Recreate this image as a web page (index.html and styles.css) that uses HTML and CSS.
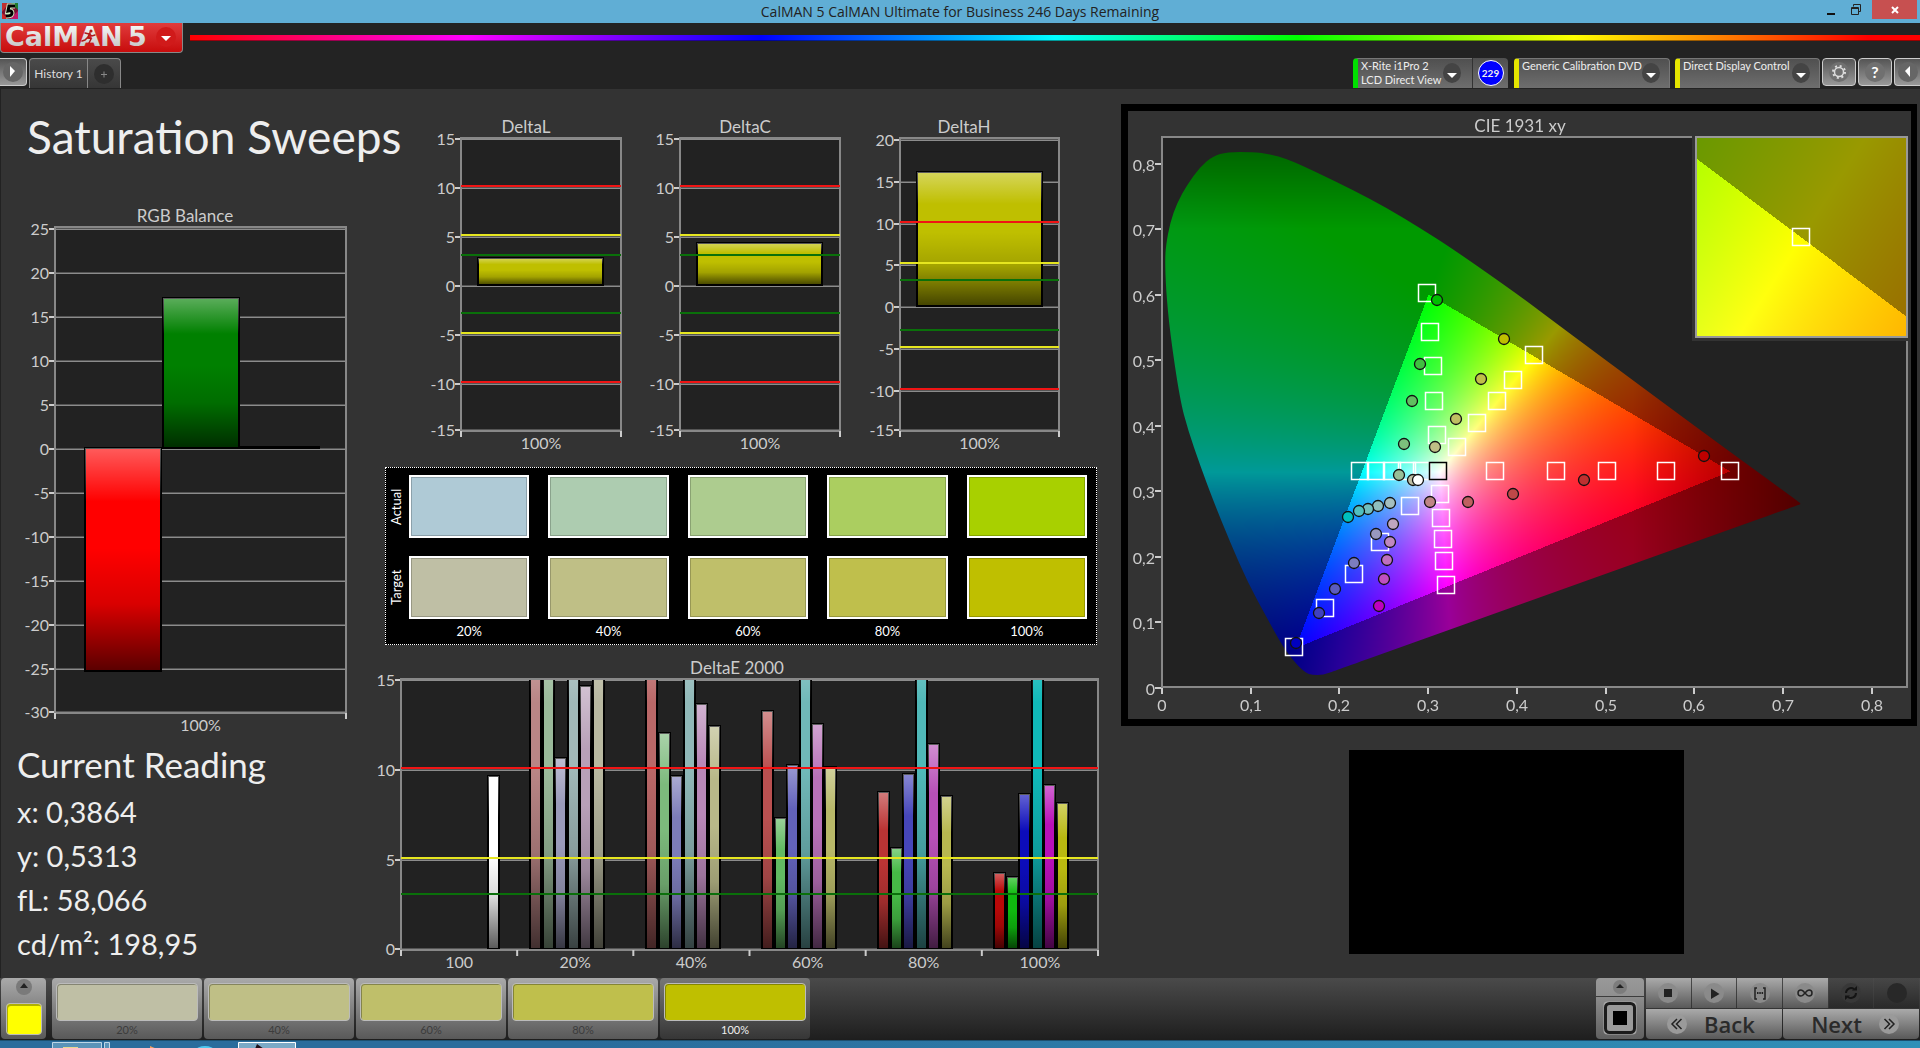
FILE: index.html
```html
<!DOCTYPE html>
<html lang="en">
<head>
<meta charset="utf-8">
<title>CalMAN 5</title>
<link rel="stylesheet" href="styles.css">
</head>
<body>
<svg class="defs" width="0" height="0" aria-hidden="true">
  <defs>
    <linearGradient id="shade" x1="0" y1="0" x2="0" y2="1">
      <stop offset="0" stop-color="#fff" stop-opacity=".36"/>
      <stop offset=".24" stop-color="#fff" stop-opacity="0"/>
      <stop offset=".24" stop-color="#000" stop-opacity="0"/>
      <stop offset=".45" stop-color="#000" stop-opacity="0"/>
      <stop offset=".7" stop-color="#000" stop-opacity=".15"/>
      <stop offset="1" stop-color="#000" stop-opacity=".65"/>
    </linearGradient>
    <linearGradient id="silver" x1="0" y1="0" x2="0" y2="1">
      <stop offset="0" stop-color="#fff"/>
      <stop offset="1" stop-color="#bdbdbd"/>
    </linearGradient>
  </defs>
</svg>

<header class="titlebar">
  <svg class="app-icon" width="16" height="16" viewBox="0 0 16 16" aria-hidden="true">
    <rect width="16" height="16" fill="#7a1030"/>
    <path d="M0 0h7L0 9z" fill="#c03030"/><path d="M9 0h7v7z" fill="#207a30"/><path d="M16 8v8H8z" fill="#c01868"/><path d="M0 10v6h6z" fill="#d02828"/>
    <path d="M13 3H7L6 8Q10 7 10 10T4 13" fill="none" stroke="#cfe8c0" stroke-width="5"/>
    <path d="M13 3H7L6 8Q10 7 10 10T4 13" fill="none" stroke="#000" stroke-width="3"/>
  </svg>
  <p class="window-title">CalMAN 5 CalMAN Ultimate for Business 246 Days Remaining</p>
  <div class="window-buttons">
    <button aria-label="Minimize"><svg width="12" height="14" viewBox="0 0 12 14"><path d="M1 10h8v2H1z" fill="#111"/></svg></button>
    <button aria-label="Restore"><svg width="12" height="12" viewBox="0 0 12 12" fill="none" stroke="#222"><path d="M3.500 2.500v-2h7v7h-2"/><path d="M1.500 3.500h7v7h-7zM1.500 4.500h7"/></svg></button>
    <button class="close" aria-label="Close"><svg width="8" height="8" viewBox="0 0 8 8" stroke="#fff" stroke-width="2"><path d="M1 1l6 6M7 1L1 7"/></svg></button>
  </div>
</header>

<div class="brand-row">
  <button class="logo" aria-label="CalMAN menu">
    <svg width="181" height="30" viewBox="0 0 181 30">
      <g fill="url(#silver)" font-family="DejaVu Sans" font-weight="700" font-size="27">
        <text x="4" y="23">CalMAN</text><text x="127" y="23">5</text>
      </g>
      <g fill="none" stroke="#b01818" stroke-width="1.500" stroke-linecap="round">
        <circle cx="90" cy="8" r=".8"/><path d="M89 10l-2 4 3 2-2 4M87 14l-3 3-3 1M84 10l4 1 3 2 3-1"/>
      </g>
      <circle cx="165" cy="14" r="10" fill="#d01a1a"/>
      <path d="M160 13h10l-5 5z" fill="#fff"/>
    </svg>
  </button>
  <div class="rainbow"></div>
</div>

<div class="tab-row">
  <button class="round-btn edge-left" aria-label="Expand left panel"><svg width="20" height="20" viewBox="0 0 20 20"><circle cx="10" cy="10" r="10" fill="#666"/><path d="M7 4l5 5-5 6z" fill="#fff"/></svg></button>
  <nav class="tabs">
    <a href="#history">History 1</a>
    <button aria-label="Add tab"><svg width="20" height="20" viewBox="0 0 20 20"><circle cx="10" cy="10" r="10" fill="#2e2e2e"/><path d="M7 10.500h6M10 7.500v6" stroke="#888"/></svg></button>
  </nav>
  <div class="devices">
    <button class="device device-meter ready"><span>X-Rite i1Pro 2<br>LCD Direct View</span><svg width="18" height="20" viewBox="0 0 18 20"><ellipse cx="9" cy="10" rx="9" ry="10" fill="#444"/><path d="M4 10h10l-5 5z" fill="#fff"/></svg></button>
    <div class="count"><span>229</span></div>
    <button class="device device-source"><span>Generic Calibration DVD</span><svg width="18" height="20" viewBox="0 0 18 20"><ellipse cx="9" cy="10" rx="9" ry="10" fill="#444"/><path d="M4 10h10l-5 5z" fill="#fff"/></svg></button>
    <button class="device device-display"><span>Direct Display Control</span><svg width="18" height="20" viewBox="0 0 18 20"><ellipse cx="9" cy="10" rx="9" ry="10" fill="#444"/><path d="M4 10h10l-5 5z" fill="#fff"/></svg></button>
    <button class="round-btn" aria-label="Settings"><svg width="20" height="20" viewBox="0 0 20 20"><circle cx="10" cy="10" r="10" fill="#707070"/><circle cx="10" cy="10" r="4.500" fill="none" stroke="#ddd" stroke-width="1.500"/><circle cx="10" cy="10" r="6" fill="none" stroke="#ddd" stroke-width="2" stroke-dasharray="2 2.710"/></svg></button>
    <button class="round-btn help" aria-label="Help"><span>?</span></button>
    <button class="round-btn edge-right" aria-label="Collapse right panel"><svg width="20" height="20" viewBox="0 0 20 20"><circle cx="10" cy="10" r="10" fill="#666"/><path d="M12 4l-5 5 5 6z" fill="#fff"/></svg></button>
  </div>
</div>

<main class="workspace">
  <section class="col-left">
    <h1>Saturation Sweeps</h1>
    <svg id="rgb-balance" class="chart" viewBox="0 0 385 530" role="img" aria-label="RGB Balance"></svg>
    <div class="reading">
      <h2>Current Reading</h2>
      <p>x: 0,3864</p>
      <p>y: 0,5313</p>
      <p>fL: 58,066</p>
      <p>cd/m²: 198,95</p>
    </div>
  </section>

  <section class="col-mid">
    <div class="deltas">
      <svg id="delta-l" class="chart" viewBox="0 0 219 350" role="img" aria-label="DeltaL"></svg>
      <svg id="delta-c" class="chart" viewBox="0 0 219 350" role="img" aria-label="DeltaC"></svg>
      <svg id="delta-h" class="chart" viewBox="0 0 219 350" role="img" aria-label="DeltaH"></svg>
    </div>
    <div class="swatches">
      <div class="swatch-row"><span class="side">Actual</span><i class="a20"></i><i class="a40"></i><i class="a60"></i><i class="a80"></i><i class="a100"></i></div>
      <div class="swatch-row"><span class="side">Target</span><i class="t20"></i><i class="t40"></i><i class="t60"></i><i class="t80"></i><i class="t100"></i></div>
      <div class="swatch-row captions"><span></span><b>20%</b><b>40%</b><b>60%</b><b>80%</b><b>100%</b></div>
    </div>
    <svg id="delta-e" class="chart" viewBox="0 0 736 320" role="img" aria-label="DeltaE 2000"></svg>
  </section>

  <section class="col-right">
    <div class="cie">
      <canvas id="cie-fill" width="783" height="608"></canvas>
      <svg id="cie-marks" viewBox="1128 111 783 608" role="img" aria-label="CIE 1931 xy"></svg>
    </div>
    <div class="preview"></div>
  </section>
</main>

<footer class="bottom-bar">
  <button class="current-color" aria-label="Current color"><svg width="16" height="16" viewBox="0 0 16 16"><circle cx="8" cy="8" r="8" fill="#7a7a7a"/><path d="M4 9h8L8 4z" fill="#222"/></svg><i></i></button>
  <nav class="levels">
    <button><i class="t20"></i>20%</button>
    <button><i class="t40"></i>40%</button>
    <button><i class="t60"></i>60%</button>
    <button><i class="t80"></i>80%</button>
    <button class="active"><i class="t100"></i>100%</button>
  </nav>
  <div class="pattern">
    <button aria-label="Pattern list"><svg width="16" height="14" viewBox="0 0 16 14"><circle cx="8" cy="7" r="7" fill="#7c7c7c"/><path d="M4 8h8L8 4z" fill="#222"/></svg></button>
    <button aria-label="Pattern window"><svg width="34" height="34" viewBox="0 0 34 34"><rect x=".5" y=".5" width="33" height="33" rx="4" fill="#a8a8a8"/><rect x="2.500" y="2.500" width="29" height="29" rx="4" fill="#9a9a9a" stroke="#1c1c1c" stroke-width="3"/><path d="M10 10h14v14H10z"/></svg></button>
  </div>
  <div class="transport">
    <div class="controls">
      <button aria-label="Stop"><svg width="20" height="20" viewBox="0 0 20 20"><circle cx="10" cy="10" r="10" fill="#8a8a8a"/><path d="M6 6h8v8H6z" fill="#222"/></svg></button>
      <button aria-label="Read"><svg width="20" height="20" viewBox="0 0 20 20"><circle cx="10" cy="10" r="10" fill="#8a8a8a"/><path d="M7 5.500l8.500 5.500L7 16z" fill="#222"/></svg></button>
      <button aria-label="Read series"><svg width="20" height="20" viewBox="0 0 20 20"><circle cx="10" cy="10" r="10" fill="#8a8a8a"/><path d="M7 5H5v11h2M13 5h2v11h-2" fill="none" stroke="#222" stroke-width="1.500"/><path d="M7 10h1.500M9.300 10h1.500M11.600 10h1.500" stroke="#222" stroke-width="2"/></svg></button>
      <button aria-label="Read continuously"><svg width="20" height="20" viewBox="0 0 20 20"><circle cx="10" cy="10" r="10" fill="#8a8a8a"/><path d="M10 10C8 7.500 7 7 6 7a3 3 0 0 0 0 6c1 0 2-.5 4-3s3-3 4-3a3 3 0 0 1 0 6c-1 0-2-.5-4-3z" fill="none" stroke="#222" stroke-width="1.500"/></svg></button>
      <button class="dark" aria-label="Repeat"><svg width="20" height="20" viewBox="0 0 20 20"><circle cx="10" cy="10" r="10" fill="#383838"/><path d="M5 10a5 5 0 0 1 8-4M15 10a5 5 0 0 1-8 4" fill="none" stroke="#141414" stroke-width="2"/><path d="M11 7.500h5V3zM9 12.500H4V17z" fill="#141414"/></svg></button>
      <button class="dark" aria-label="Record"><svg width="20" height="20" viewBox="0 0 20 20"><circle cx="10" cy="10" r="10" fill="#282828"/></svg></button>
    </div>
    <div class="steps">
      <button><svg width="20" height="20" viewBox="0 0 20 20"><circle cx="10" cy="10" r="10" fill="#9a9a9a"/><path d="M10 5l-5 5 5 5M14.500 5l-5 5 5 5" fill="none" stroke="#222" stroke-width="1.500"/></svg>Back</button>
      <button>Next<svg width="20" height="20" viewBox="0 0 20 20"><circle cx="10" cy="10" r="10" fill="#9a9a9a"/><path d="M10 5l5 5-5 5M5.500 5l5 5-5 5" fill="none" stroke="#222" stroke-width="1.500"/></svg></button>
    </div>
  </div>
</footer>
<div class="taskbar">
  <svg width="300" height="8" viewBox="0 0 300 8" aria-hidden="true">
    <path d="M28 8q5-1 10-1v1z" fill="#fff"/>
    <path d="M52.500 8V1.500h49V8M104.500 8V1.500h5V8" fill="#5a93b8" stroke="#bcd6e6"/><path d="M63 6h15v2H63z" fill="#e8d890"/>
    <path d="M150 5l7 3h-7z" fill="#f0a060"/><ellipse cx="205" cy="9" rx="9" ry="4" fill="#50c8f0"/>
    <path d="M238.500 8V1.500h57V8" fill="#7ba9c6" stroke="#fff"/><path d="M257 3l7 5h-9z" fill="#201018"/>
  </svg>
</div>
<script src="charts.js"></script>
</body>
</html>
```
FILE: charts.js
```js
const NS = 'http://www.w3.org/2000/svg';

function add(parent, name, attrs, text) {
  const el = document.createElementNS(NS, name);
  for (const key in attrs) el.setAttribute(key, attrs[key]);
  if (text !== undefined) el.textContent = text;
  parent.appendChild(el);
  return el;
}

function line(svg, x1, y1, x2, y2, color, width = 1) {
  add(svg, 'path', { d: `M${x1} ${y1}L${x2} ${y2}`, stroke: color, 'stroke-width': width });
}

// Bar chart: c gives the plot box, the zero line, the unit height, ticks, bars and limits.
function barChart(id, c) {
  const svg = document.getElementById(id);
  const y = v => Math.round(c.zero - v * c.unit);
  add(svg, 'text', { x: c.titleX, y: c.top - 5, 'text-anchor': 'middle', class: 'chart-title' }, c.title);
  add(svg, 'rect', { x: c.left, y: c.top, width: c.right - c.left, height: c.bottom - c.top, fill: '#222' });
  c.ticks.forEach(v => {
    const ty = Math.min(y(v), c.bottom - 1);
    line(svg, c.left, ty - .5, c.right, ty - .5, '#555');
    line(svg, c.left, ty + .5, c.right, ty + .5, '#8c8c8c');
    line(svg, c.left - 6, ty, c.left, ty, '#ccc', 2);
    add(svg, 'text', { x: c.left - 6, y: ty + 6, 'text-anchor': 'end' }, v);
  });
  c.bars.forEach(([x, w, v, color]) => {
    const a = y(Math.max(v, 0)), b = y(Math.min(v, 0));
    const g = add(svg, 'svg', { x: 0, y: c.top + 1, width: c.right, height: c.bottom - c.top - 1 });
    ['base', 'shade'].forEach((s, i) => add(g, 'rect', {
      x: x + 1, y: a - c.top - 2, width: w - 1, height: Math.max(b - a, 1),
      fill: i ? 'url(#shade)' : color, stroke: '#000', 'stroke-width': i ? 0 : 2 }));
  });
  add(svg, 'rect', { x: c.left, y: c.top, width: c.right - c.left, height: c.bottom - c.top, fill: 'none', stroke: '#888', 'stroke-width': 2 });
  (c.limits || []).forEach(([v, color]) => line(svg, c.left, y(v) - 2, c.right, y(v) - 2, color, 2));
  const step = (c.right - c.left) / c.cats.length;
  c.cats.forEach((name, i) => {
    line(svg, c.left + step * i, c.bottom, c.left + step * i, c.bottom + 6, '#ccc', 2);
    add(svg, 'text', { x: c.left + step * (i + .5), y: c.bottom + 18, 'text-anchor': 'middle' }, name);
  });
  line(svg, c.right, c.bottom, c.right, c.bottom + 6, '#ccc', 2);
}

barChart('rgb-balance', {
  title: 'RGB Balance', titleX: 185, left: 55, right: 346, top: 22, bottom: 508, zero: 244, unit: 8.8,
  ticks: [25, 20, 15, 10, 5, 0, -5, -10, -15, -20, -25, -30], cats: ['100%'],
  bars: [[84, 77, -25.3, '#f00'], [162, 77, 17.1, '#008000'], [240, 79, .1, '#000']]
});

const limits = [[10, '#f01414'], [5, '#e6e620'], [3, '#0a700a'], [-3, '#0a700a'], [-5, '#e6e620'], [-10, '#f01414']];
const low = [15, 10, 5, 0, -5, -10, -15];
const delta = { left: 43, right: 203, top: 28, bottom: 321, titleX: 108, cats: ['100%'], limits };
barChart('delta-l', { ...delta, title: 'DeltaL', zero: 176, unit: 9.8, ticks: low, bars: [[59, 126, 2.8, '#bfbf00']] });
barChart('delta-c', { ...delta, title: 'DeltaC', zero: 176, unit: 9.8, ticks: low, bars: [[59, 126, 4.3, '#bfbf00']] });
barChart('delta-h', { ...delta, title: 'DeltaH', left: 44, right: 203, zero: 197, unit: 8.35, ticks: [20, ...low], bars: [[60, 126, 16, '#bfbf00']] });

const groups = [
  [[18, '#b98585'], [18, '#9aba9a'], [10.6, '#9a9aba'], [18, '#a0b8b8'], [14.6, '#b8a0b8'], [18, '#b8b8a0']],
  [[18, '#ba6868'], [12, '#7cba7c'], [9.6, '#7c7cba'], [18, '#90b8b8'], [13.6, '#b888b8'], [12.4, '#b8b888']],
  [[13.2, '#ba5050'], [7.3, '#62ba62'], [10.2, '#6262ba'], [18, '#70b8b8'], [12.5, '#b870b8'], [10.1, '#b8b868']],
  [[8.7, '#ba3434'], [5.6, '#46ba46'], [9.7, '#4646ba'], [18, '#50b8b8'], [11.4, '#b850b8'], [8.5, '#b8b850']],
  [[4.2, '#ba0808'], [4, '#0fba0f'], [8.6, '#0c0cba'], [18, '#10b8b8'], [9.1, '#b810b8'], [8.1, '#b8b810']]
];
const deBars = [[102, 12, 9.6, '#fff']];
groups.forEach((g, i) => g.forEach(([v, color], j) => deBars.push([Math.round(144 + i * 116 + j * 12.6), 12, v, color])));
barChart('delta-e', {
  title: 'DeltaE 2000', titleX: 352, left: 16, right: 713, top: 24, bottom: 295, zero: 295, unit: 18,
  ticks: [15, 10, 5, 0], cats: ['100', '20%', '40%', '60%', '80%', '100%'], bars: deBars,
  limits: [[10, '#f01414'], [5, '#e6e620'], [3, '#0a700a']]
});

/* CIE 1931 diagram. Plot scale: x = 0 at 1162, y = 0 at 687. */
const G = [.30, .60], R = [.64, .33], B = [.15, .06];
const side = (a, b, x, y) => (b[0] - a[0]) * (y - a[1]) - (b[1] - a[1]) * (x - a[0]);

function colorAt(x, y) {
  if (y < .001) y = .001;
  const X = x / y, Z = (1 - x - y) / y;
  const rgb = [3.2406 * X - 1.5372 - .4986 * Z, -.9689 * X + 1.8758 + .0415 * Z, .0557 * X - .204 + 1.057 * Z];
  const max = Math.max(...rgb);
  const inside = side(G, R, x, y) <= 0 && side(R, B, x, y) <= 0 && side(B, G, x, y) <= 0;
  let k = inside ? 1 : .6;
  if (x > .53) k *= 1 - (x - .53) * 2.5;
  if (y > .7) k *= 1 - (y - .7) * 2.8;
  if (!inside && x < .2 && y < .33) k *= 1 - Math.min(.2, (.2 - x) * (.33 - y) * 8);
  return rgb.map(c => 255 * k * Math.max(c / max, 0));
}

function field(w, h, toXY) {
  const cv = document.createElement('canvas');
  cv.width = w; cv.height = h;
  const ctx = cv.getContext('2d'), img = ctx.createImageData(w, h);
  for (let j = 0, p = 0; j < h; j++) for (let i = 0; i < w; i++, p += 4) {
    const [r, g, b] = colorAt(...toXY(i, j));
    img.data[p] = r; img.data[p + 1] = g; img.data[p + 2] = b; img.data[p + 3] = 255;
  }
  ctx.putImageData(img, 0, 0);
  return cv;
}

const locus = [[1227,152],[1253,152],[1270,154],[1287,159],[1303,166],[1320,174],[1353,190],[1387,208],[1420,228],[1453,249],[1520,296],[1553,321],[1700,430],[1799,502],[1801,504],[1798,505],[1337,670],[1323,675],[1312,675],[1306,673],[1297,665],[1283,647],[1267,618],[1248,583],[1230,542],[1213,500],[1200,465],[1188,430],[1180,400],[1170,333],[1166,290],[1165,260],[1166,245],[1170,223],[1177,203],[1187,185],[1200,167],[1213,156]];

const ctx = document.getElementById('cie-fill').getContext('2d');
ctx.translate(-1128, -111);
ctx.fillStyle = '#222';
ctx.fillRect(1162, 137, 746, 550);
ctx.save();
ctx.beginPath();
const n = locus.length, mid = i => [(locus[i % n][0] + locus[(i + 1) % n][0]) / 2, (locus[i % n][1] + locus[(i + 1) % n][1]) / 2];
ctx.moveTo(...mid(0));
for (let i = 1; i <= n; i++) ctx.quadraticCurveTo(...locus[i % n], ...mid(i));
ctx.clip();
ctx.drawImage(field(640, 530, (i, j) => [i / 887, (537 - j) / 655]), 1162, 150);
ctx.restore();
ctx.fillStyle = '#333';
ctx.fillRect(1692, 130, 219, 211);
ctx.drawImage(field(211, 200, (i, j) => [.4193 + (i - 105) / 4220, .5053 - (j - 100) / 4000]), 1696, 137);

const cie = document.getElementById('cie-marks');
add(cie, 'text', { x: 1520, y: 132, 'text-anchor': 'middle', class: 'chart-title' }, 'CIE 1931 xy');
add(cie, 'path', { d: 'M1692 137H1162V687H1907V341', fill: 'none', stroke: '#888', 'stroke-width': 2 });
add(cie, 'rect', { x: 1696, y: 137, width: 211, height: 200, fill: 'none', stroke: '#999', 'stroke-width': 2 });
for (let i = 0; i <= 8; i++) {
  const label = i ? '0,' + i : '0', x = Math.round(1162 + i * 88.7), y = Math.round(687.5 - i * 65.5);
  line(cie, x, 688, x, 694, '#ccc', 2);
  add(cie, 'text', { x, y: 711, 'text-anchor': 'middle' }, label);
  line(cie, 1155, y, 1161, y, '#ccc', 2);
  add(cie, 'text', { x: 1155, y: y + 7, 'text-anchor': 'end' }, label);
}
const squares = [[1360,471],[1376,471],[1392,471],[1407,471],[1422,471],[1495,471],[1556,471],[1607,471],[1666,471],[1730,471],[1427,293],[1430,332],[1433,366],[1434,401],[1437,435],[1457,447],[1477,423],[1497,401],[1513,380],[1534,355],[1440,494],[1441,518],[1443,539],[1444,561],[1446,585],[1410,506],[1380,542],[1354,574],[1325,608],[1294,647],[1801,237]];
const square = (x, y, stroke) => add(cie, 'rect', { x: x - 8.5, y: y - 8.5, width: 17, height: 17, fill: 'none', stroke, 'stroke-width': 1.5 });
squares.forEach(([x, y]) => square(x, y, '#fff'));
square(1438, 471, '#000');
const dots = [[1404,444,'#7cbf7c'],[1435,447,'#bfbf85'],[1437,300,'#00bf00'],[1420,364,'#40bf40'],[1412,401,'#60bf60'],[1504,339,'#bfbf00'],[1481,379,'#bfbf48'],[1456,419,'#bfbf62'],[1399,475,'#98bf98'],[1413,480,'#bfbfa5'],[1418,480,'#fff'],[1430,502,'#bf8585'],[1468,502,'#bf6060'],[1513,494,'#bf4848'],[1584,480,'#bf3030'],[1704,456,'#bf0000'],[1390,503,'#a5bfbf'],[1378,506,'#90bfbf'],[1368,509,'#70bfbf'],[1359,511,'#50bfbf'],[1348,517,'#00bfbf'],[1393,524,'#bfa5bf'],[1390,542,'#bf88bf'],[1387,560,'#bf70bf'],[1384,579,'#bf50bf'],[1379,606,'#bf00bf'],[1376,534,'#9898bf'],[1354,563,'#7c7cbf'],[1335,589,'#5c5cbf'],[1319,613,'#4040bf'],[1296,643,'#0000bf']];
dots.forEach(([cx, cy, fill]) => add(cie, 'circle', { cx, cy, r: 5.5, fill, stroke: '#111', 'stroke-width': 1.3 }));
```
FILE: styles.css
```css
* { box-sizing: border-box; }
body { margin: 0; min-height: 100vh; display: flex; flex-direction: column; background: #232323; color: #eee; font-family: Lato, sans-serif; overflow-x: hidden; }
button { border: 0; padding: 0; margin: 0; background: none; color: inherit; font: inherit; cursor: pointer; }
h1, h2, p { margin: 0; font-weight: 400; white-space: nowrap; }
svg, canvas { display: block; }
.defs { position: absolute; }

.titlebar { display: grid; grid-template-columns: 120px 1fr 120px; height: 23px; background: #60aed5; }
.app-icon { margin: 3px 2px; }
.window-title { font: 14px/23px "Open Sans", sans-serif; color: #222; text-align: center; }
.window-buttons { display: flex; justify-content: flex-end; gap: 8px; padding-right: 3px; height: 19px; }
.window-buttons button { display: grid; place-items: center; width: 16px; }
.window-buttons .close { width: 45px; background: #c75050; }

.brand-row { display: flex; align-items: flex-start; gap: 7px; height: 35px; }
.logo { height: 30px; border: 1px solid #888; border-top: 0; border-radius: 0 0 4px 4px; background: linear-gradient(#e03c3c, #c80c0c); }
.rainbow { flex: 1; height: 6px; margin-top: 12px; background: linear-gradient(90deg, #f00, #f0f 16%, #00f 33%, #0ff 50%, #0f0 64%, #ff0 80%, #f00 97%); border-bottom: 1px solid rgba(0, 0, 0, .4); }

.tab-row { display: flex; align-items: flex-start; height: 31px; }
.round-btn { display: grid; place-items: center; width: 34px; height: 28px; border: 1px solid #ccc; border-radius: 4px; background: linear-gradient(#555, #999); }
.edge-left { width: 27px; border-left: 0; border-radius: 0 4px 4px 0; margin-right: 2px; }
.edge-right { width: 26px; border-right: 0; border-radius: 4px 0 0 4px; }
.help span { width: 20px; height: 20px; border-radius: 50%; background: #707070; color: #fff; font: 700 16px/20px Lato, sans-serif; }
.tabs { display: flex; height: 30px; border: 1px solid #888; border-bottom: 0; border-radius: 4px 4px 0 0; background: linear-gradient(#4a4a4a, #363636); }
.tabs a { width: 58px; border-right: 1px solid #888; color: #ddd; font-size: 12px; line-height: 30px; text-align: center; text-decoration: none; white-space: nowrap; }
.tabs button { display: grid; place-items: center; width: 32px; }
.devices { display: flex; gap: 2px; margin-left: auto; }
.device { display: flex; align-items: flex-start; justify-content: space-between; height: 30px; padding: 0 9px 0 3px; border: 1px solid #777; border-left: 5px solid #e6e600; border-bottom: 0; border-radius: 4px 4px 0 0; background: linear-gradient(#505050, #6e6e6e); font-size: 11px; line-height: 14px; text-align: left; white-space: nowrap; }
.device svg { margin-top: 4px; }
.device-meter { width: 119px; padding-right: 11px; border-left-color: #00e000; border-right: 0; border-radius: 4px 0 0 0; }
.device-source { width: 156px; margin-right: 3px; }
.device-display { width: 145px; }
.count { display: grid; place-items: center; width: 36px; height: 30px; margin: 0 4px 0 -2px; border-left: 1px solid #333; border-radius: 0 4px 0 0; background: linear-gradient(#505050, #6e6e6e); }
.count span { width: 26px; height: 26px; border: 1px solid #fff; border-radius: 50%; background: #00f; font: 700 10px/24px Lato, sans-serif; text-align: center; }

.workspace { flex: 1; display: grid; grid-template-columns: minmax(0, 385fr) minmax(0, 736fr) minmax(0, 799fr); align-items: start; background: #333; box-shadow: inset 1px 0 #222; }
.chart { width: 100%; height: auto; overflow: visible; }
svg text { font-family: Lato, sans-serif; font-size: 16px; fill: #ccc; }
svg .chart-title { font-size: 17px; }
.logo svg text { font-family: "DejaVu Sans", sans-serif; font-size: 27px; fill: url(#silver); }
.col-left h1 { padding: 18px 0 0 27px; font-size: 46px; line-height: 60px; height: 116px; }
.reading { padding: 7px 0 0 17px; font-size: 29px; line-height: 44px; }
.reading h2 { margin-bottom: 4px; font-size: 35px; line-height: 44px; }
.deltas { display: grid; grid-template-columns: 33fr 219fr 219fr 219fr 46fr; padding-top: 21px; }
.deltas :first-child { grid-column: 2; }
.swatches { display: grid; align-content: start; gap: 18px; height: 178px; margin: 7px 24px 10px 0; padding: 7px 9px 0 0; border: 1px dotted #fff; background: #000; }
.swatch-row { display: grid; grid-template-columns: 4px repeat(5, 1fr); gap: 19px; height: 63px; }
.swatch-row i { border: 2px solid #fff; box-shadow: inset 0 0 0 1px rgba(0, 0, 0, .2); }
.side { width: 20px; writing-mode: vertical-rl; transform: rotate(180deg); color: #fff; font-size: 13px; line-height: 20px; text-align: center; }
.captions { height: 20px; margin-top: -16px; }
.captions b { font-size: 13px; line-height: 20px; font-weight: 400; text-align: center; color: #fff; }
.a20 { background: #afcad6; } .a40 { background: #adccb0; } .a60 { background: #adcc8f; } .a80 { background: #abce60; } .a100 { background: #a8d000; }
.t20 { background: #bfbfa5; } .t40 { background: #bfbf86; } .t60 { background: #bfbf6a; } .t80 { background: #bfbf4c; } .t100 { background: #bfbf00; }
.cie { display: grid; margin: 15px 3px 24px 0; border: 7px solid #000; border-right-width: 6px; }
.cie > * { grid-area: 1 / 1; width: 100%; height: auto; }
.preview { width: 42%; aspect-ratio: 336 / 204; margin-left: 28.5%; background: #000; }

.bottom-bar { display: flex; gap: 2px; height: 62px; padding: 0 1px 1px; background: linear-gradient(#4a4a4a, #1e1e1e); }
.bottom-bar button { background: linear-gradient(#aaa, #595959); }
.current-color { display: flex; flex-direction: column; align-items: center; justify-content: space-between; width: 45px; padding: 1px 0 4px; border-radius: 4px; margin-right: 4px; }
.current-color i { width: 36px; height: 32px; border: 1px solid #bbb; border-radius: 4px; background: #ff0; box-shadow: inset 1px 2px 0 #b0b000; }
.levels { display: flex; gap: 2px; }
.levels button { display: flex; flex-direction: column; align-items: center; width: 150px; padding-top: 5px; border-radius: 4px; color: #3c3c3c; font-size: 11px; line-height: 17px; }
.levels i { width: 142px; height: 38px; border: 1px solid #bbb; border-radius: 4px; box-shadow: inset 1px 1px 0 rgba(0, 0, 0, .3); }
.levels .active { background: linear-gradient(#777, #363636); color: #eee; }
.pattern { display: grid; grid-template-rows: 18px 1fr; gap: 1px; width: 48px; margin-left: auto; }
.pattern button, .controls button { display: grid; place-items: center; }
.pattern button:first-child { border-radius: 4px 4px 0 0; background: linear-gradient(#999, #909090); }
.pattern button:last-child { border-radius: 0 0 4px 4px; background: linear-gradient(#8c8c8c, #606060); }
.transport { display: grid; grid-template-rows: 30px 30px; gap: 1px; width: 273px; }
.controls { display: grid; grid-template-columns: repeat(6, 1fr); gap: 1px; }
.controls .dark { background: linear-gradient(#474747, #2a2a2a); }
.steps { display: grid; grid-template-columns: 1fr 1fr; gap: 1px; }
.steps button { display: flex; align-items: center; justify-content: center; gap: 17px; padding: 0 6px 0 0; border-radius: 0 0 4px 4px; color: #2a2a2a; font: 600 22px/28px "Open Sans", sans-serif; }
.steps button:last-child { padding: 0 0 0 8px; }
.taskbar { height: 8px; overflow: hidden; background: linear-gradient(90deg, #2a6c9c 30%, #3090b8); border-top: 1px solid #1c5070; }
```
